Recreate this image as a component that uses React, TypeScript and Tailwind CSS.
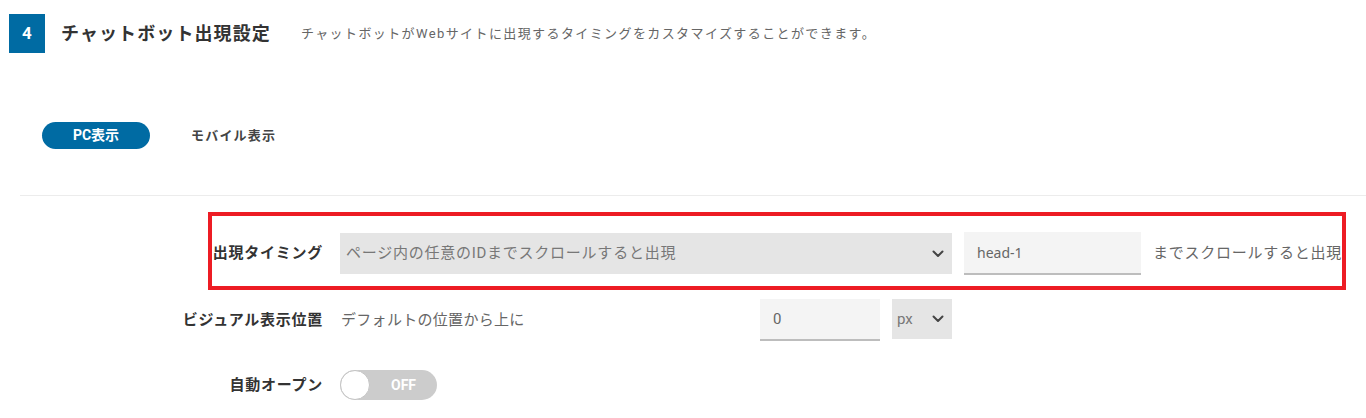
import { useState } from "react";

function Chevron() {
  return (
    <svg width="12" height="8" viewBox="0 0 12 8" fill="none" aria-hidden>
      <path d="M1.5 1.5 6 6l4.5-4.5" stroke="#444" strokeWidth="2" strokeLinecap="round" strokeLinejoin="round" />
    </svg>
  );
}

export default function App() {
  const [tab, setTab] = useState<"pc" | "mobile">("pc");
  const [autoOpen, setAutoOpen] = useState(false);

  return (
    <div className="h-[418px] w-[1366px] overflow-hidden bg-white font-['Roboto','Noto_Sans_CJK_JP',sans-serif] text-[#333]">
      {/* Section header */}
      <div className="flex items-center pt-[14px]">
        <div className="ml-[9px] flex h-[39px] w-[36px] items-center justify-center bg-[#006ba3] text-[17px] font-bold text-white">
          4
        </div>
        <h2 className="ml-[16px] text-[18px] font-bold tracking-[1.1px] text-[#333]">チャットボット出現設定</h2>
        <p className="ml-[30px] text-[13px] tracking-[1.4px] text-[#666]">
          チャットボットがWebサイトに出現するタイミングをカスタマイズすることができます。
        </p>
      </div>

      {/* PC / mobile tabs */}
      <div className="mt-[69px] flex items-center">
        <button
          onClick={() => setTab("pc")}
          className={`ml-[42px] h-[27px] w-[108px] rounded-full text-[14px] font-bold ${tab === "pc" ? "bg-[#006ba3] text-white" : "text-[#444]"}`}
        >
          PC表示
        </button>
        <button
          onClick={() => setTab("mobile")}
          className={`ml-[41px] h-[27px] rounded-full text-[13px] font-bold tracking-[1.2px] ${tab === "mobile" ? "bg-[#006ba3] px-4 text-white" : "text-[#444]"}`}
        >
          モバイル表示
        </button>
      </div>

      <div className="ml-[20px] mt-[46px] h-px bg-[#ececec]" />

      {/* Highlighted row: appearance timing */}
      <div className="ml-[208px] mt-[16px] flex h-[78px] w-[1138px] items-center border-4 border-[#ed1c24] pt-[5px]">
        <label className="w-[111px] text-right text-[15px] font-bold tracking-[0.05em]">出現タイミング</label>
        <div className="ml-[17px] flex h-[41px] w-[612px] items-center justify-between bg-[#e5e5e5] pl-[6px] pr-[8px]">
          <span className="text-[15px] tracking-[0.05em] text-[#777]">ページ内の任意のIDまでスクロールすると出現</span>
          <Chevron />
        </div>
        <div className="ml-[12px] flex h-[43px] w-[177px] items-center border-b-2 border-[#bdbdbd] bg-[#f4f4f4] pl-[13px] font-['Noto_Sans',sans-serif] text-[14px] text-[#666]">
          head-1
        </div>
        <span className="ml-[12px] text-[15px] tracking-[0.05em] text-[#666]">までスクロールすると出現</span>
      </div>

      {/* Visual position */}
      <div className="mt-[9px] flex h-[42px] items-center">
        <label className="w-[323px] text-right text-[15px] font-bold tracking-[0.05em]">ビジュアル表示位置</label>
        <span className="ml-[18px] w-[419px] text-[15px] tracking-[0.02em] text-[#666]">デフォルトの位置から上に</span>
        <div className="flex h-[42px] w-[120px] items-center self-start border-b-2 border-[#bdbdbd] bg-[#f4f4f4] pl-[13px] text-[15px] text-[#666]">
          0
        </div>
        <div className="ml-[12px] flex h-[40px] w-[60px] items-center justify-between self-start bg-[#e5e5e5] pl-[5px] pr-[8px]">
          <span className="text-[15px] text-[#777]">px</span>
          <Chevron />
        </div>
      </div>

      {/* Auto open */}
      <div className="mt-[29px] flex items-center">
        <label className="w-[323px] text-right text-[15px] font-bold tracking-[0.05em]">自動オープン</label>
        <button
          onClick={() => setAutoOpen(!autoOpen)}
          className={`ml-[17px] flex h-[30px] w-[97px] items-center rounded-full ${autoOpen ? "bg-[#006ba3]" : "bg-[#cccccc]"}`}
        >
          <span className="h-[30px] w-[30px] rounded-full border border-[#c4c4c4] bg-white" />
          <span className="flex-1 text-center text-[14px] font-bold text-white">{autoOpen ? "ON" : "OFF"}</span>
        </button>
      </div>
    </div>
  );
}
